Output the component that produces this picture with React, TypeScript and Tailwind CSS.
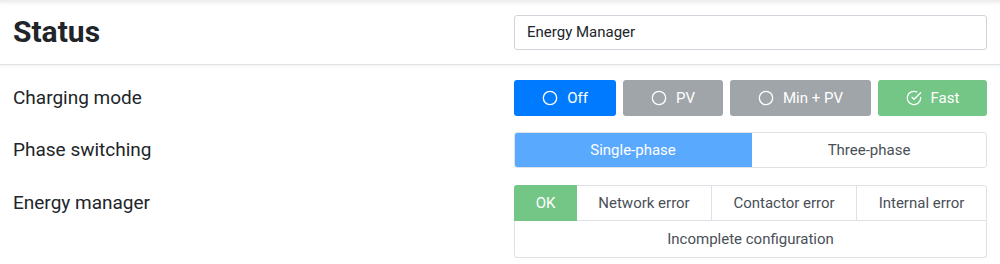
import React from "react";

const CircleIcon = () => (
  <svg width="16" height="16" viewBox="0 0 24 24" fill="none" stroke="currentColor" strokeWidth="2" strokeLinecap="round" strokeLinejoin="round">
    <circle cx="12" cy="12" r="10" />
  </svg>
);

const CheckCircleIcon = () => (
  <svg width="16" height="16" viewBox="0 0 24 24" fill="none" stroke="currentColor" strokeWidth="2" strokeLinecap="round" strokeLinejoin="round">
    <path d="M22 11.08V12a10 10 0 1 1-5.93-9.14" />
    <polyline points="22 4 12 14.01 9 11.01" />
  </svg>
);

export default function App() {
  return (
    <div className="w-[1000px] h-[264px] bg-white text-[#212529] overflow-hidden" style={{ fontFamily: "Roboto, 'Noto Sans', sans-serif" }}>
      <div className="h-[65px] flex items-center justify-between px-[13px] border-b border-[#dee2e6] shadow-[inset_0_6px_5px_-4px_rgba(0,0,0,0.10),0_2px_3px_rgba(0,0,0,0.04)]">
        <h1 className="text-[30px] font-bold leading-none">Status</h1>
        <div className="w-[473px] h-[35px] border border-[#ced4da] rounded-[3px] flex items-center px-[12px] text-[15px]">
          Energy Manager
        </div>
      </div>

      <div className="px-[13px] pt-[15px] flex flex-col gap-[16px]">
        <div className="flex items-center justify-between">
          <span className="text-[19px]">Charging mode</span>
          <div className="w-[473px] flex gap-[7px] text-[15px] text-white">
            <button className="w-[102px] h-[36px] rounded-[3px] bg-[#007bff] flex items-center justify-center gap-[9px]">
              <CircleIcon /> Off
            </button>
            <button className="w-[100px] h-[36px] rounded-[3px] bg-[#a0a5aa] flex items-center justify-center gap-[9px]">
              <CircleIcon /> PV
            </button>
            <button className="w-[141px] h-[36px] rounded-[3px] bg-[#a0a5aa] flex items-center justify-center gap-[9px]">
              <CircleIcon /> Min + PV
            </button>
            <button className="flex-1 h-[36px] rounded-[3px] bg-[#73c686] flex items-center justify-center gap-[9px]">
              <CheckCircleIcon /> Fast
            </button>
          </div>
        </div>

        <div className="flex items-center justify-between">
          <span className="text-[19px]">Phase switching</span>
          <div className="w-[473px] h-[36px] flex text-[15px] rounded-[3px] border border-[#dee2e6] overflow-hidden">
            <div className="w-[238px] bg-[#59a9ff] text-white flex items-center justify-center -m-px mr-0">Single-phase</div>
            <div className="flex-1 flex items-center justify-center text-[#495057]">Three-phase</div>
          </div>
        </div>

        <div className="flex items-start justify-between mt-px">
          <span className="text-[19px] mt-[4px]">Energy manager</span>
          <div className="w-[473px] flex flex-col text-[15px] text-[#495057]">
            <div className="h-[36px] flex border border-[#dee2e6] rounded-t-[3px]">
              <div className="w-[63px] bg-[#73c686] text-white flex items-center justify-center -m-px mr-0 rounded-tl-[3px]">OK</div>
              <div className="w-[135px] flex items-center justify-center border-r border-[#dee2e6]">Network error</div>
              <div className="w-[145px] flex items-center justify-center border-r border-[#dee2e6]">Contactor error</div>
              <div className="flex-1 flex items-center justify-center">Internal error</div>
            </div>
            <div className="h-[37px] flex items-center justify-center border border-t-0 border-[#dee2e6] rounded-b-[3px]">
              Incomplete configuration
            </div>
          </div>
        </div>
      </div>
    </div>
  );
}
